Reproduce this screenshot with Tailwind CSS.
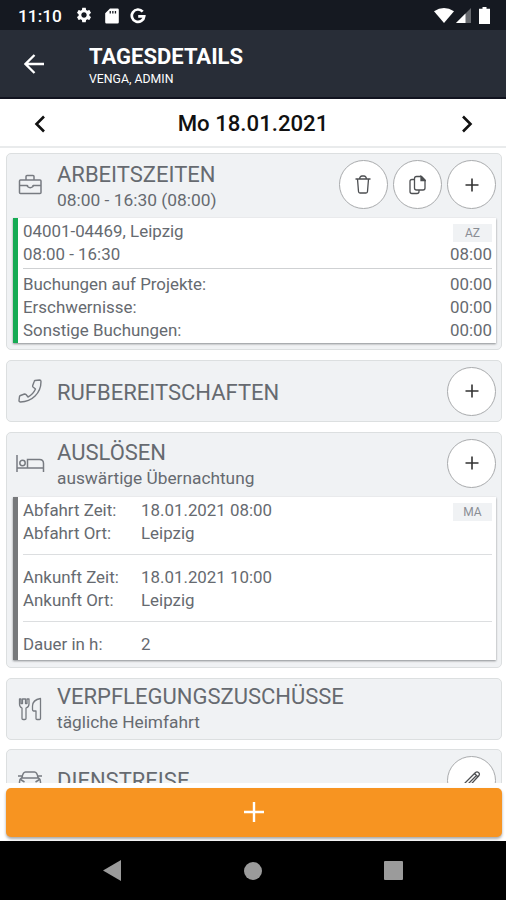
<!DOCTYPE html>
<html lang="de">
<head>
    <meta charset="UTF-8">
    <meta name="viewport" content="width=device-width, initial-scale=1.0">
    <title>Tagesdetails</title>
    <script src="https://cdn.jsdelivr.net/npm/@tailwindcss/browser@4"></script>
</head>
<body class="bg-white font-[Roboto,sans-serif] text-[#666a70]">
<div class="flex flex-col h-[900px] w-[506px] overflow-hidden">

    <!-- Status bar -->
    <div class="flex items-center h-[30px] shrink-0 bg-[#151921] text-white pl-[18px] pr-4">
        <span class="w-[57px] text-[17.300px] leading-[30px] font-medium pt-px">11:10</span>
        <svg class="w-[18px] h-[18px]" viewBox="0 0 24 24" fill="currentColor"><path d="M19.14 12.94c.04-.3.06-.61.06-.94 0-.32-.02-.64-.07-.94l2.03-1.58c.18-.14.23-.41.12-.61l-1.92-3.32c-.12-.22-.37-.29-.59-.22l-2.39.96c-.5-.38-1.03-.7-1.62-.94l-.36-2.54c-.04-.24-.24-.41-.48-.41h-3.84c-.24 0-.43.17-.47.41l-.36 2.54c-.59.24-1.13.57-1.62.94l-2.39-.96c-.22-.08-.47 0-.59.22L2.74 8.87c-.12.21-.08.47.12.61l2.03 1.58c-.05.3-.09.63-.09.94s.02.64.07.94l-2.03 1.58c-.18.14-.23.41-.12.61l1.92 3.32c.12.22.37.29.59.22l2.39-.96c.5.38 1.03.7 1.62.94l.36 2.54c.05.24.24.41.48.41h3.84c.24 0 .44-.17.47-.41l.36-2.54c.59-.24 1.13-.56 1.62-.94l2.39.96c.22.08.47 0 .59-.22l1.92-3.32c.12-.22.07-.47-.12-.61l-2.01-1.58zM12 15.6c-1.98 0-3.6-1.62-3.6-3.6s1.62-3.6 3.6-3.6 3.6 1.62 3.6 3.6-1.62 3.6-3.6 3.6z"/></svg>
        <svg class="w-[14px] h-4 ml-3 mt-px" viewBox="0 0 14 16" fill="currentColor"><path fill-rule="evenodd" d="M5 .5h7.500A1.300 1.300 0 0 1 13.800 1.800v12.400a1.300 1.300 0 0 1-1.300 1.300h-11A1.300 1.300 0 0 1 .2 14.200V5.300zM4.600 3h1.300v2.600H4.600zM7.200 3h1.300v2.600H7.200zM9.800 3h1.300v2.600H9.800z"/></svg>
        <svg class="w-4 h-4 ml-[11px] mt-px" viewBox="0 0 16 16" fill="none" stroke="currentColor" stroke-width="2.700"><path d="M12.700 3.600A6.200 6.200 0 1 0 14.200 8.300H8.200"/></svg>
        <svg class="w-5 h-[15px] ml-auto" viewBox="0 0 20 15" fill="currentColor"><path d="M0 3.200Q10-3.200 20 3.200L10 15z"/></svg>
        <svg class="w-[15px] h-[15px] ml-[2px]" viewBox="0 0 15 15" fill="currentColor"><path d="M15 0v15H0z" opacity=".35"/><path d="M9.500 5.500V15H0z"/></svg>
        <svg class="w-[11px] h-[17px] ml-2" viewBox="0 0 11 17" fill="currentColor"><path d="M3.500 0h4v1.700H11V17H0V1.700h3.500z"/></svg>
    </div>

    <!-- App bar -->
    <header class="flex items-center h-[69px] shrink-0 bg-[#282d37] border-b-2 border-[#11131f] text-white">
        <svg class="w-5 h-5 ml-6 mt-px" viewBox="0 0 20 20" fill="none" stroke="currentColor" stroke-width="2.300"><path d="M20 10H2M10.500 1L1.500 10l9 9"/></svg>
        <div class="ml-[45px] pt-[5px]">
            <h1 class="text-[22px] leading-[26px] font-bold">TAGESDETAILS</h1>
            <p class="text-[12.300px] leading-[18px]">VENGA, ADMIN</p>
        </div>
    </header>

    <!-- Date -->
    <div class="flex items-center justify-between h-[49px] shrink-0 border-b-2 border-[#e9ebec] pl-[34px] pr-[33px] text-[#111]">
        <svg class="w-3 h-[18px] mt-[2px]" viewBox="0 0 12 18" fill="none" stroke="currentColor" stroke-width="2.600"><path d="M10 1.500L2.500 9l7.500 7.500"/></svg>
        <span class="text-[22.200px] font-medium pt-[3px] -ml-px">Mo 18.01.2021</span>
        <svg class="w-3 h-[18px] mt-[2px]" viewBox="0 0 12 18" fill="none" stroke="currentColor" stroke-width="2.600"><path d="M2 1.500L9.500 9 2 16.500"/></svg>
    </div>

    <main class="flex flex-col gap-[10px] h-[635px] shrink-0 overflow-hidden pt-[5px] pl-[6px] pr-1">

        <!-- Arbeitszeiten -->
        <section class="h-[197px] shrink-0 rounded-[5px] border border-[#dcdfe0] bg-[#f0f2f4] pt-px pl-[6px] pr-[5px]">
            <div class="flex items-center h-[63px]">
                <svg class="w-6 h-6 ml-[5px] mt-[-4px]" viewBox="0 0 24 24" fill="none" stroke="#777b81" stroke-width="1.500"><rect x="1.500" y="7" width="21.500" height="13.500" rx="1"/><path d="M8 7V3.500Q8 2.500 9 2.500h6q1 0 1 1V7M1.500 12.500h8M15 12.500h8M9.500 12v1.500q2.700 2.500 5.500 0v-1.500"/></svg>
                <div class="ml-[15px]">
                    <h2 class="text-[22px] leading-[27px] -mt-px">ARBEITSZEITEN</h2>
                    <p class="text-[17.400px] leading-[24px]">08:00 - 16:30 (08:00)</p>
                </div>
                <div class="flex gap-[5px] ml-auto -mt-1">
                    <button class="flex items-center justify-center size-[49px] rounded-full bg-white border border-[#a9abad]">
                        <svg class="w-4 h-[19px] -ml-px" viewBox="0 0 16 19" fill="none" stroke="#4d4f52" stroke-width="1.300"><path d="M.5 4h15M2.500 4l1 12.500q.1 1.500 1.500 1.500h6q1.400 0 1.500-1.500l1-12.500M4.500 4q.5-3 2.500-3h2q2 0 2.500 3"/></svg>
                    </button>
                    <button class="flex items-center justify-center size-[49px] rounded-full bg-white border border-[#a9abad]">
                        <svg class="w-[17px] h-5" viewBox="0 0 17 20" fill="none" stroke="#4d4f52" stroke-width="1.300"><path d="M7.500 1.500h5l3.500 3.500v8q0 2-2 2H7.500q-2 0-2-2v-9.500q0-2 2-2zM5.500 4.500H3q-2 0-2 2v10q0 2 2 2h5q2 0 2-2v-1.500"/><path d="M12 1.500V5.500h4z" fill="#4d4f52"/></svg>
                    </button>
                    <button class="flex items-center justify-center size-[49px] rounded-full bg-white border border-[#a9abad]">
                        <svg class="w-[14px] h-[14px]" viewBox="0 0 14 14" fill="none" stroke="#333" stroke-width="1.600"><path d="M7 .5v13M.5 7h13"/></svg>
                    </button>
                </div>
            </div>
            <div class="h-[125px] border-l-[5px] border-l-[#16ab54] bg-white pl-[5px] pr-1 pt-[2px] text-[16.900px] leading-[23px] shadow-[0_1px_2px_#8a8d90]">
                <div class="flex justify-between items-center">
                    <span>04001-04469, Leipzig</span>
                    <span class="w-[39px] h-[18px] mt-[3px] bg-[#f0f2f4] text-center text-[12px] leading-[19px] text-[#8a8e94]">AZ</span>
                </div>
                <div class="flex justify-between"><span>08:00 - 16:30</span><span>08:00</span></div>
                <hr class="border-[#cfd1d3] mt-[2px] mb-1">
                <div class="flex justify-between"><span>Buchungen auf Projekte:</span><span>00:00</span></div>
                <div class="flex justify-between"><span>Erschwernisse:</span><span>00:00</span></div>
                <div class="flex justify-between"><span>Sonstige Buchungen:</span><span>00:00</span></div>
            </div>
        </section>

        <!-- Rufbereitschaften -->
        <section class="flex items-center h-[62px] shrink-0 rounded-[5px] border border-[#dcdfe0] bg-[#f0f2f4] pl-[11px] pr-[5px]">
            <svg class="w-6 h-6" viewBox="0 0 24 24" fill="none" stroke="#777b81" stroke-width="1.400" stroke-linejoin="round"><path d="M17 1.500l4.500-.5q1.500 0 1.500 1.500C23 14 14 23 2.500 23 1.500 23 1 22.500 1 21.500l.500-4Q1.500 17 2.500 16.500l4-1.500q1 0 1.500.5l2 2.500q5-2.500 7.500-8L15 8q-.6-.6-.3-1.500l1.500-4Q16.400 1.700 17 1.500z"/></svg>
            <h2 class="ml-[15px] text-[22px] leading-[27px] pt-[2px]">RUFBEREITSCHAFTEN</h2>
            <button class="flex items-center justify-center size-[49px] ml-auto rounded-full bg-white border border-[#a9abad]">
                <svg class="w-[14px] h-[14px]" viewBox="0 0 14 14" fill="none" stroke="#333" stroke-width="1.600"><path d="M7 .5v13M.5 7h13"/></svg>
            </button>
        </section>

        <!-- Auslösen -->
        <section class="h-[236px] shrink-0 rounded-[5px] border border-[#dcdfe0] bg-[#f0f2f4] pt-px pl-[6px] pr-[5px]">
            <div class="flex items-center h-[63px]">
                <svg class="w-[29px] h-[17px] ml-[3px] mt-[-5px]" viewBox="0 0 29 17" fill="none" stroke="#777b81" stroke-width="1.500"><path d="M1 0v17M1 13h26.500M11.500 13V4.500h12q4 0 4 4V17"/><circle cx="6.500" cy="8" r="2.700"/></svg>
                <div class="ml-3">
                    <h2 class="text-[22px] leading-[27px] -mt-[2px]">AUSLÖSEN</h2>
                    <p class="text-[17.300px] leading-[24px]">auswärtige Übernachtung</p>
                </div>
                <button class="flex items-center justify-center size-[49px] ml-auto mt-[-5px] rounded-full bg-white border border-[#a9abad]">
                    <svg class="w-[14px] h-[14px]" viewBox="0 0 14 14" fill="none" stroke="#333" stroke-width="1.600"><path d="M7 .5v13M.5 7h13"/></svg>
                </button>
            </div>
            <div class="h-[163px] border-l-[5px] border-l-[#77797b] bg-white pl-[5px] pr-1 pt-[2px] text-[16.900px] leading-[23px] shadow-[0_1px_2px_#8a8d90]">
                <div class="flex items-center">
                    <span class="w-[118px]">Abfahrt Zeit:</span><span>18.01.2021 08:00</span>
                    <span class="w-[39px] h-[18px] mt-[3px] ml-auto bg-[#f0f2f4] text-center text-[12px] leading-[19px] text-[#8a8e94]">MA</span>
                </div>
                <div class="flex"><span class="w-[118px]">Abfahrt Ort:</span><span>Leipzig</span></div>
                <hr class="border-[#dcdee0] mt-[9px] mb-[11px]">
                <div class="flex"><span class="w-[118px]">Ankunft Zeit:</span><span>18.01.2021 10:00</span></div>
                <div class="flex"><span class="w-[118px]">Ankunft Ort:</span><span>Leipzig</span></div>
                <hr class="border-[#dcdee0] mt-[9px] mb-[11px]">
                <div class="flex"><span class="w-[118px]">Dauer in h:</span><span>2</span></div>
            </div>
        </section>

        <!-- Verpflegungszuschüsse -->
        <section class="flex items-center h-[62px] shrink-0 rounded-[5px] border border-[#dcdfe0] bg-[#f0f2f4] pl-[11px] pr-[5px]">
            <svg class="w-6 h-6 -mt-px" viewBox="0 0 24 24" fill="none" stroke="#777b81" stroke-width="1.300" stroke-linejoin="round"><path d="M1.500 2v5q0 3 2.500 4v10.500q0 1 1.200 1h1.600q1.200 0 1.200-1V11q3-1 3-4V2H9v4.500H7.500V2h-3v4.500H3V2zM22.500 1.500v20q0 1-1 1H19q-1 0-1-1V14h-2.500q-1-.2-1-1.500V9q0-6 8-7.500z"/></svg>
            <div class="ml-[15px]">
                <h2 class="text-[22px] leading-[27px]">VERPFLEGUNGSZUSCHÜSSE</h2>
                <p class="text-[17.300px] leading-[25px]">tägliche Heimfahrt</p>
            </div>
        </section>

        <!-- Dienstreise -->
        <section class="flex items-center h-[62px] -mt-px shrink-0 rounded-[5px] border border-[#dcdfe0] bg-[#f0f2f4] pl-[11px] pr-[5px]">
            <svg class="w-6 h-[18px]" viewBox="0 0 24 18" fill="none" stroke="#777b81" stroke-width="1.500"><path d="M4 6.500Q5 1 7.500 1h9q2.500 0 3.500 5.500M0 5h4M20 5h4M3.500 7h17q2 1 2 4v6H19v-3H5v3H1.500v-6q0-3 2-4z"/><path d="M2.500 8.500l4 2.500M21.500 8.500l-4 2.500"/></svg>
            <h2 class="ml-[15px] text-[22px] leading-[27px]">DIENSTREISE</h2>
            <button class="flex items-center justify-center size-[49px] ml-auto rounded-full bg-white border border-[#a9abad]">
                <svg class="w-5 h-5" viewBox="0 0 20 20" fill="none" stroke="#4d4f52" stroke-width="1.300" stroke-linejoin="round"><path d="M2 18l1-5L13.500 2.500q1.500-1.200 3 0t.5 3L7 16.500zM12.500 3.500l3.500 3.500M14 6L5 15"/></svg>
            </button>
        </section>
    </main>

    <!-- Add button -->
    <div class="h-[58px] shrink-0 pt-[5px] pl-[6px] pr-1">
        <button class="flex items-center justify-center w-full h-[49px] rounded-[5px] bg-[#f79421] text-white shadow-[0_2px_3px_#a8aaac]">
            <svg class="w-5 h-5 -ml-px -mt-px" viewBox="0 0 20 20" fill="none" stroke="currentColor" stroke-width="2.400"><path d="M10 0v20M0 10h20"/></svg>
        </button>
    </div>

    <!-- Navigation bar -->
    <nav class="flex items-center justify-between grow bg-black text-[#9b9b9b] pl-[103px] pr-[103px]">
        <svg class="w-[18px] h-[21px]" viewBox="0 0 18 21" fill="currentColor"><path d="M18 0v21L0 10.500z"/></svg>
        <svg class="w-[18px] h-[18px]" viewBox="0 0 18 18" fill="currentColor"><circle cx="9" cy="9" r="9"/></svg>
        <svg class="w-[19px] h-[19px]" viewBox="0 0 19 19" fill="currentColor"><rect width="19" height="19" rx="1"/></svg>
    </nav>
</div>
</body>
</html>
